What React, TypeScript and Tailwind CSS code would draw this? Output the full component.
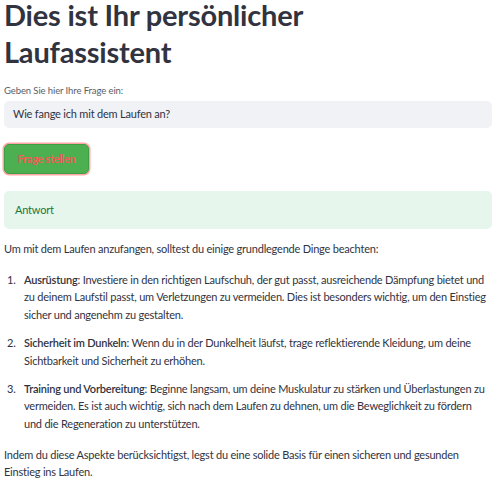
const items = [
  {
    head: 'Ausrüstung',
    text: 'Investiere in den richtigen Laufschuh, der gut passt, ausreichende Dämpfung bietet und zu deinem Laufstil passt, um Verletzungen zu vermeiden. Dies ist besonders wichtig, um den Einstieg sicher und angenehm zu gestalten.',
  },
  {
    head: 'Sicherheit im Dunkeln',
    text: 'Wenn du in der Dunkelheit läufst, trage reflektierende Kleidung, um deine Sichtbarkeit und Sicherheit zu erhöhen.',
  },
  {
    head: 'Training und Vorbereitung',
    text: 'Beginne langsam, um deine Muskulatur zu stärken und Überlastungen zu vermeiden. Es ist auch wichtig, sich nach dem Laufen zu dehnen, um die Beweglichkeit zu fördern und die Regeneration zu unterstützen.',
  },
];

export default function App() {
  return (
    <div className="min-h-screen bg-white px-[4px] font-['Lato','Liberation_Sans',sans-serif] text-[#31333f]">
      <h1 className="text-[29px] font-bold leading-[29px] tracking-[-0.2px]">
        <span className="block">Dies ist Ihr persönlicher</span>
        <span className="mt-[8px] block">Laufassistent</span>
      </h1>

      <label className="mt-[18px] block text-[9.5px] leading-[14px] tracking-[-0.1px] text-[#5b5d67]">
        Geben Sie hier Ihre Frage ein:
      </label>
      <div className="mt-[3px] flex h-[27px] items-center rounded-[5px] bg-[#f0f2f6] px-[9px] text-[11px] tracking-[-0.2px]">
        Wie fange ich mit dem Laufen an?
      </div>

      <button className="mt-[16px] flex h-[30px] w-[85px] items-center justify-center rounded-[5px] border border-[#3f9e44] bg-[#4caf50] text-[11px] font-bold tracking-[-0.3px] text-[#f45a55] shadow-[0_0_0_1.5px_rgba(255,130,130,0.7)]">
        Frage stellen
      </button>

      <div className="mt-[17px] flex h-[38px] items-center rounded-[5px] bg-[#e6f6ec] px-[11px] text-[11px] tracking-[-0.2px] text-[#1c7538]">
        Antwort
      </div>

      <div className="text-[11px] leading-[17.2px] tracking-[-0.21px]">
        <p className="mt-[11px]">
          Um mit dem Laufen anzufangen, solltest du einige grundlegende Dinge beachten:
        </p>
        <ol className="mt-[14px] flex flex-col gap-[11.5px] pr-[2px]">
          {items.map((it, i) => (
            <li key={it.head} className="flex">
              <span className="w-[20px] shrink-0 pl-[3px]">{i + 1}.</span>
              <span>
                <b className="font-semibold">{it.head}</b>: {it.text}
              </span>
            </li>
          ))}
        </ol>
        <p className="mt-[14px]">
          Indem du diese Aspekte berücksichtigst, legst du eine solide Basis für einen sicheren und gesunden
          Einstieg ins Laufen.
        </p>
      </div>
    </div>
  );
}
